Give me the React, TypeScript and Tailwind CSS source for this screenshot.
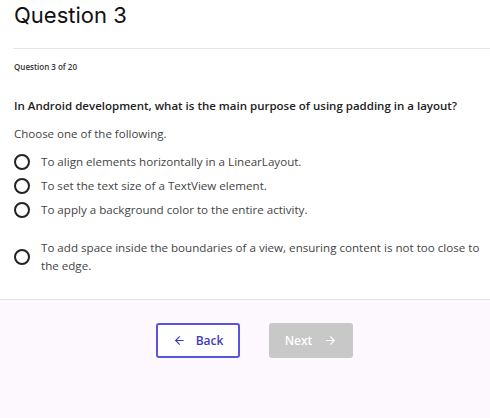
import type { FC } from "react";
import { ArrowLeft, ArrowRight } from "lucide-react";

const options = [
  "To align elements horizontally in a LinearLayout.",
  "To set the text size of a TextView element.",
  "To apply a background color to the entire activity.",
  "To add space inside the boundaries of a view, ensuring content is not too close to the edge.",
];

const Radio: FC = () => (
  <span className="h-[16px] w-[16px] shrink-0 rounded-full border-2 border-[#222]" />
);

const App: FC = () => {
  return (
    <div className="flex min-h-[418px] flex-col bg-white font-['Open_Sans',sans-serif] text-[#333]">
      <header className="px-[14px] pt-[2px]">
        <h1 className="font-['Inter',sans-serif] text-[22px] leading-[26px] text-[#111]">Question 3</h1>
      </header>
      <div className="ml-[13px] mt-[20px] border-t border-[#e3e3e3]" />

      <main className="pl-[14px] pr-[6px] pb-[24px]">
        <p className="mt-[12px] text-[8px] font-semibold leading-[12px] text-[#333]">Question 3 of 20</p>
        <h2 className="mt-[25px] text-[11.5px] font-semibold leading-[16px] text-[#222]">
          In Android development, what is the main purpose of using padding in a layout?
        </h2>
        <p className="mt-[12px] text-[11.5px] leading-[16px] text-[#444]">Choose one of the following.</p>

        <ul className="mt-[11px] flex flex-col gap-[6px]">
          {options.map((o, i) => (
            <li key={o} className={`flex items-center gap-[11px] ${i === 3 ? "mt-[14px]" : ""}`}>
              <Radio />
              <span className="text-[11.6px] leading-[18px] text-[#444]">{o}</span>
            </li>
          ))}
        </ul>
      </main>

      <footer className="flex flex-1 items-start justify-center gap-[29px] border-t border-[#e3e3e3] bg-[#fdf8fd] pl-[19px] pt-[23px]">
        <button className="flex h-[35px] w-[84px] items-center justify-center gap-[10px] rounded-[3px] border-2 border-[#5a55dc] bg-white text-[12px] font-semibold text-[#3f3ac2]">
          <ArrowLeft className="h-[13px] w-[13px]" strokeWidth={2} />
          Back
        </button>
        <button className="flex h-[35px] w-[84px] items-center justify-center gap-[12px] rounded-[3px] bg-[#c8c8c8] text-[12px] font-semibold text-white">
          Next
          <ArrowRight className="h-[13px] w-[13px]" strokeWidth={2} />
        </button>
      </footer>
    </div>
  );
};

export default App;
